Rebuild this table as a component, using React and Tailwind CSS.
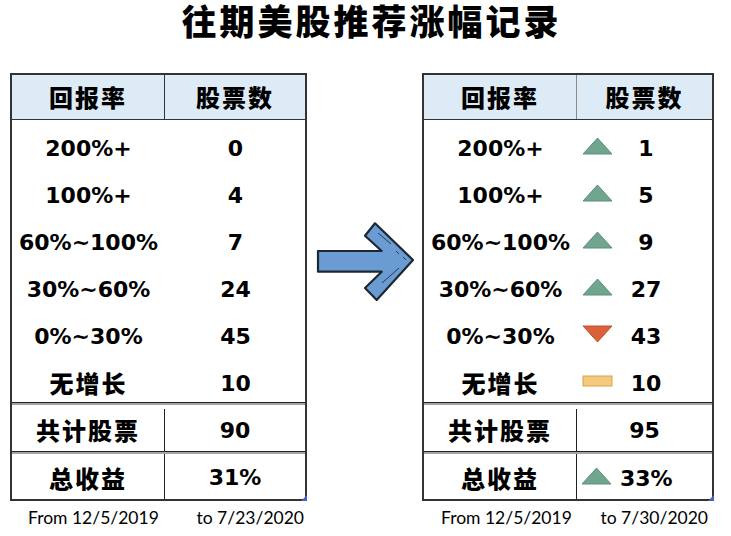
import React from "react";

const cjk = { fontFamily: '"Noto Sans CJK SC", sans-serif' };
const num = { fontFamily: '"DejaVu Sans", "Noto Sans CJK SC", sans-serif' };
const foot = { fontFamily: 'Lato, "Liberation Sans", sans-serif' };

function Up() {
  return (
    <svg width="31" height="18" viewBox="0 0 31 18" className="-mt-[4px] shrink-0">
      <polygon points="15.5,1 30,17 1,17" fill="#70a58f" stroke="#5f8f7b" strokeWidth="1" />
    </svg>
  );
}
function Down() {
  return (
    <svg width="31" height="18" viewBox="0 0 31 18" className="-mt-[4px] shrink-0">
      <polygon points="1,1 30,1 15.5,17" fill="#d9623d" stroke="#c0512e" strokeWidth="1" />
    </svg>
  );
}
function Flat() {
  return (
    <svg width="31" height="12" viewBox="0 0 31 12" className="-mt-[4px] shrink-0">
      <rect x="1" y="1" width="29" height="10" fill="#f5ca7e" stroke="#d8a24f" strokeWidth="1" />
    </svg>
  );
}

function Label({ text }) {
  const isCjk = /[\u4e00-\u9fff]/.test(text);
  return isCjk ? (
    <span style={cjk} className="text-[24px] font-black tracking-[2px] text-black">{text}</span>
  ) : (
    <span style={num} className="text-[22px] font-bold text-black whitespace-nowrap">{text}</span>
  );
}

function Sep() {
  return (
    <div className="flex flex-col">
      <div className="h-px bg-[#222]" />
      <div className="h-[2px] bg-[#a3a3a3]" />
    </div>
  );
}

function Corner() {
  return (
    <svg width="6" height="6" viewBox="0 0 6 6" className="absolute -right-[2px] -bottom-[2px]">
      <polygon points="6,0 6,6 0,6" fill="#4c5fc2" />
    </svg>
  );
}

function Table({ rows, total, gain, right, width, headDiv }) {
  return (
    <div className="relative border-2 border-[#333]" style={{ width }}>
      <div className="flex h-[45px] bg-[#ddebf7] border-b border-[#333]">
        <div className={`w-[153px] flex items-center justify-center border-r ${headDiv}`}>
          <span style={cjk} className="text-[24px] font-black tracking-[2px] text-black">回报率</span>
        </div>
        <div className="flex-1 flex items-center justify-center">
          <span style={cjk} className="text-[24px] font-black tracking-[2px] text-black">股票数</span>
        </div>
      </div>
      {rows.map((r, i) => (
        <div key={i} className="flex h-[47px] pt-[9px]">
          <div className="w-[153px] flex items-center justify-center">
            <Label text={r[0]} />
          </div>
          <div className="w-px" />
          {right ? (
            <div className="flex-1 flex items-center pl-[4px]">
              {r[2] === "up" ? <Up /> : r[2] === "down" ? <Down /> : <Flat />}
              <div className="w-[56px] ml-[5px] flex justify-center">
                <Label text={r[1]} />
              </div>
            </div>
          ) : (
            <div className="flex-1 flex items-center justify-center">
              <Label text={r[1]} />
            </div>
          )}
        </div>
      ))}
      <Sep />
      <div className="flex h-[46px] pt-[4px]">
        <div className="w-[153px] flex items-center justify-center border-r border-[#222]">
          <Label text="共计股票" />
        </div>
        <div className="flex-1 flex items-center justify-center">
          <Label text={total} />
        </div>
      </div>
      <Sep />
      <div className="flex h-[45px]">
        <div className="w-[153px] flex items-center justify-center border-r border-[#222] pt-[2px]">
          <Label text="总收益" />
        </div>
        {right ? (
          <div className="flex-1 flex items-center pl-[4px] pt-[3px]">
            <Up />
            <div className="ml-[8px]">
              <Label text={gain} />
            </div>
          </div>
        ) : (
          <div className="flex-1 flex items-center justify-center pt-[2px]">
            <Label text={gain} />
          </div>
        )}
      </div>
      <Corner />
    </div>
  );
}

function Arrow() {
  return (
    <svg width="115" height="90" viewBox="0 0 115 90" className="mt-[145px]">
      <polygon
        points="11,33 74.7,33 58,17.7 68,5.3 106,42 69.7,82 58,70 74.7,53.7 11,53.7"
        fill="#6b9bd3"
        stroke="#1e2833"
        strokeWidth="2.2"
        strokeLinejoin="round"
      />
      <line x1="71" y1="15" x2="84" y2="26" stroke="#2b3a4c" strokeWidth="1" />
      <line x1="89" y1="33" x2="92" y2="36" stroke="#2b3a4c" strokeWidth="1" />
      <line x1="96" y1="39" x2="99" y2="42" stroke="#2b3a4c" strokeWidth="1" />
      <line x1="92" y1="50" x2="75" y2="65" stroke="#2b3a4c" strokeWidth="1" />
    </svg>
  );
}

export default function App() {
  const rowsL = [
    ["200%+", "0"],
    ["100%+", "4"],
    ["60%~100%", "7"],
    ["30%~60%", "24"],
    ["0%~30%", "45"],
    ["无增长", "10"],
  ];
  const rowsR = [
    ["200%+", "1", "up"],
    ["100%+", "5", "up"],
    ["60%~100%", "9", "up"],
    ["30%~60%", "27", "up"],
    ["0%~30%", "43", "down"],
    ["无增长", "10", "flat"],
  ];
  return (
    <div className="w-[731px] h-[536px] bg-white overflow-hidden">
      <div className="h-[73px] flex items-start justify-center pl-[12px]">
        <span style={cjk} className="block text-[35px] leading-[50px] -mt-[5px] font-black tracking-[3px] text-black">
          往期美股推荐涨幅记录
        </span>
      </div>
      <div className="flex">
        <div className="ml-[10px] w-[297px] flex flex-col">
          <Table rows={rowsL} total="90" gain="31%" width={297} headDiv="border-[#333]" />
          <div style={foot} className="flex justify-between pl-[18px] pr-[3px] mt-[4px] text-[17.5px] text-black">
            <span>From 12/5/2019</span>
            <span>to 7/23/2020</span>
          </div>
        </div>
        <Arrow />
        <div className="w-[292px] flex flex-col">
          <Table rows={rowsR} total="95" gain="33%" width={292} right headDiv="border-[#8a8a8a]" />
          <div style={foot} className="flex justify-between pl-[19px] pr-[6px] mt-[4px] text-[17.5px] text-black">
            <span>From 12/5/2019</span>
            <span>to 7/30/2020</span>
          </div>
        </div>
      </div>
    </div>
  );
}
